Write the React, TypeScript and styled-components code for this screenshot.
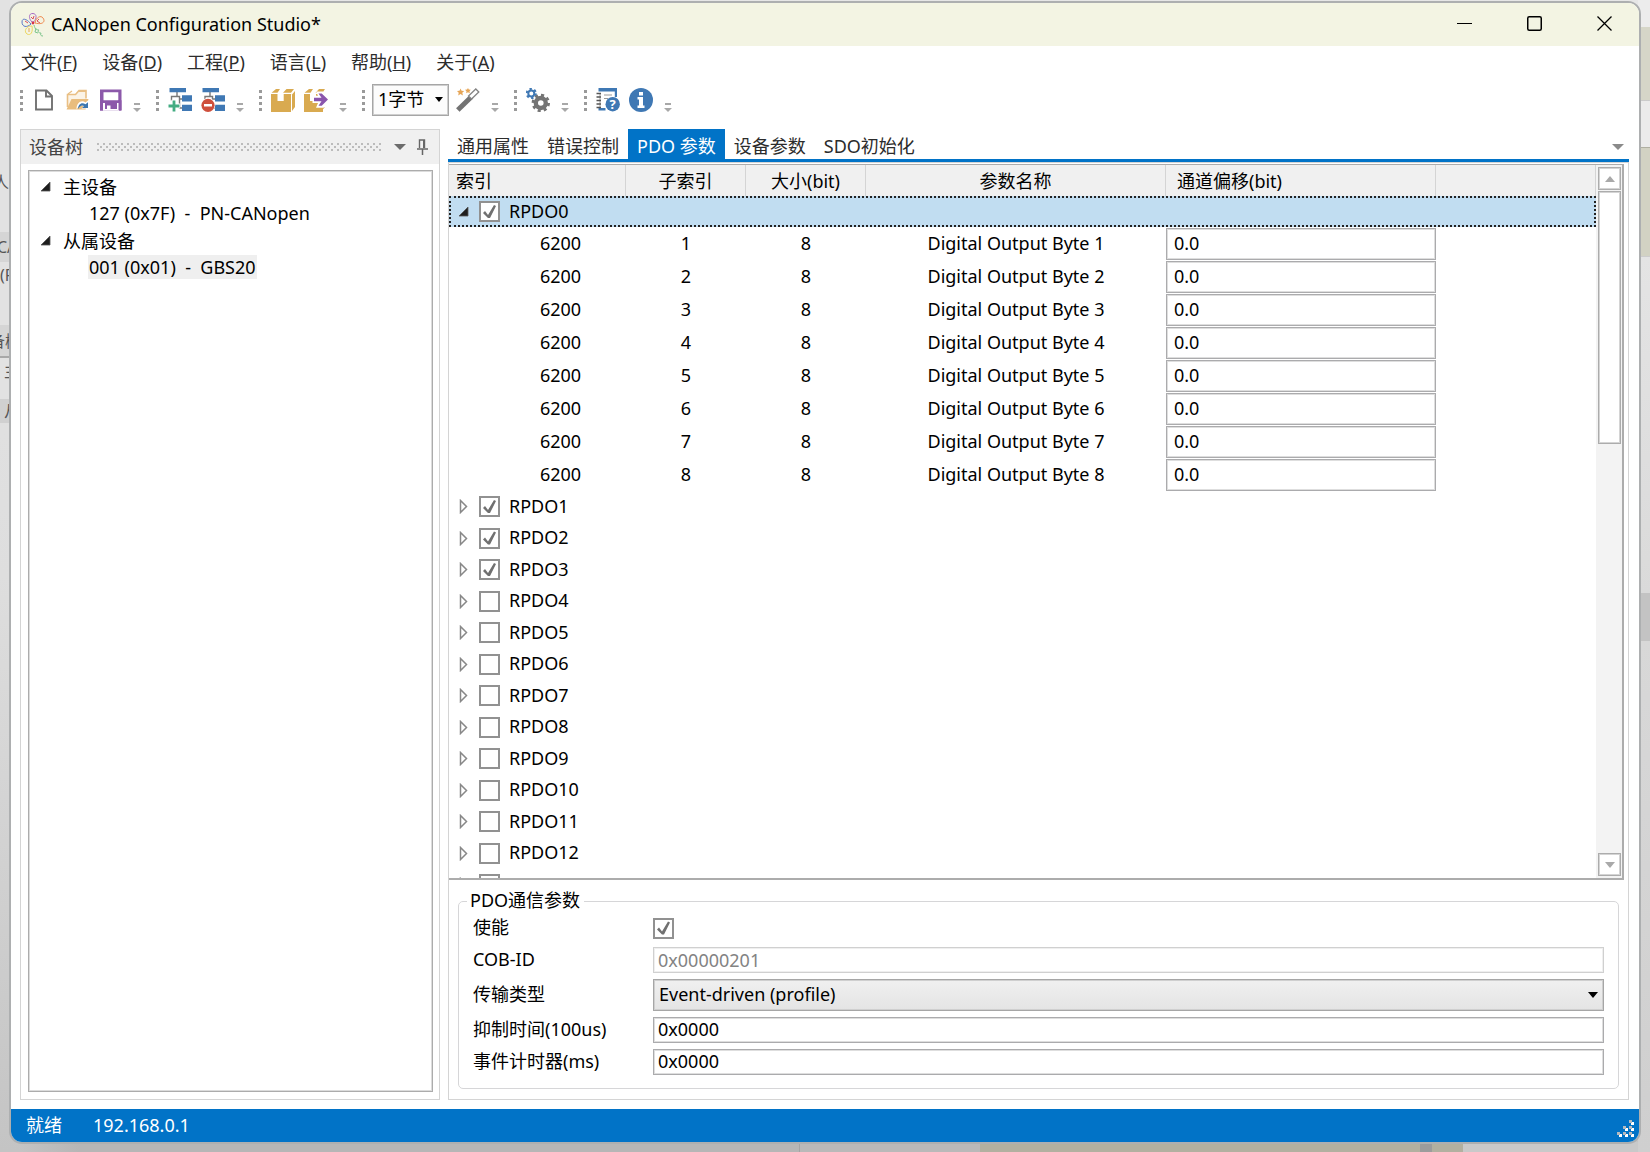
import React, { useState } from "react";
import styled, { createGlobalStyle, css } from "styled-components";

const color = {
  blue: "#0173c7",
  ink: "#000",
  chrome: "#f0f0f0",
  edge: "#d4d4d4",
  frame: "#acacac",
  selected: "#c1ddf1",
  titlebar: "#f3f4e3",
};

const GlobalStyle = createGlobalStyle`
  * { box-sizing: border-box; }
  body { margin: 0; }
  body, button, input, select {
    font-family: "Noto Sans", "Noto Sans CJK SC", sans-serif;
    font-size: 18px;
    line-height: 24px;
    color: ${color.ink};
  }
  button, input, select { margin: 0; padding: 0; border: 0; border-radius: 0; background: none; }
  svg { display: block; flex: none; }
`;

/* ---------- desktop behind the window ---------- */

const Desktop = styled.div`
  position: relative;
  display: flex;
  height: 100vh;
  min-height: 700px;
  padding: 1px 9px 8px;
  overflow: hidden;
  background: linear-gradient(#e6e6e6, #dedede 50%, #c4c4c4);
`;

const BehindLeft = styled.div`
  position: absolute;
  top: 0;
  left: 0;
  width: 10px;
  overflow: hidden;
  font-size: 16px;
  color: #555;
  background: #e2e2e2;
`;

const BehindRow = styled.div<{ $h: number; $shade?: string; $indent?: number; $line?: boolean }>`
  height: ${(p) => p.$h}px;
  line-height: ${(p) => p.$h}px;
  text-indent: ${(p) => p.$indent ?? 0}px;
  white-space: nowrap;
  background: ${(p) => p.$shade ?? "transparent"};
  border-bottom: ${(p) => (p.$line ? "2px solid #a8a8a8" : "0")};
`;

const BehindRight = styled.div`
  position: absolute;
  top: 0;
  right: 0;
  bottom: 0;
  width: 12px;
  background: linear-gradient(
    #ececec 27px, #d6d6c8 27px, #d6d6c8 100px, #aaa 100px, #ebebeb 101px, #ebebeb 147px,
    #8c8c80 147px, #d2d2c3 148px, #d2d2c3 256px, #b4b4b4 256px, #e4e4e4 257px, #dadada 593px,
    #c3c3c3 593px, #c3c3c3 641px, #d8d8d8 641px, #cfcfcf
  );
`;

const BehindBottom = styled.div`
  position: absolute;
  left: 20px;
  right: 12px;
  bottom: 0;
  height: 10px;
  background: linear-gradient(
    90deg, #c4c4c4, #b6b6b6 60px, #b6b6b6 779px, #8f8f8f 779px, #b9b9b9 780px, #b9b9b9 960px,
    #b2b0a0 960px, #b2b0a0 1400px, #9c9c9c 1400px, #9c9c9c 1412px, #b2b0a0 1412px,
    #b2b0a0 1443px, #c9c9c9 1443px
  );
`;

/* ---------- window ---------- */

const AppWindow = styled.main`
  position: relative;
  flex: 1;
  min-width: 0;
  display: flex;
  flex-direction: column;
  overflow: hidden;
  border: 2px solid #adafb0;
  border-radius: 13px;
  background: #fff;
`;

const TitleBar = styled.header`
  display: flex;
  align-items: center;
  height: 43px;
  padding-left: 10px;
  gap: 6px;
  background: ${color.titlebar};
`;

const Title = styled.h1`
  flex: 1;
  margin: 0;
  padding-bottom: 2px;
  font-size: 18px;
  font-weight: 400;
  line-height: 24px;
`;

const CaptionButtons = styled.div`
  display: flex;
`;

const CaptionButton = styled.button`
  display: grid;
  place-items: center;
  width: 70px;
  height: 43px;
  padding-bottom: 2px;
`;

const MenuBar = styled.nav`
  display: flex;
  gap: 25px;
  height: 34px;
  padding: 0 10px;
`;

const MenuItem = styled.button`
  padding-bottom: 2px;
  color: #2c2c2c;
  white-space: nowrap;
`;

const ToolBar = styled.div`
  display: flex;
  align-items: center;
  gap: 15px;
  height: 40px;
  padding: 0 9px;
`;

const ToolGroup = styled.div`
  display: flex;
  align-items: center;
  gap: 9px;
  height: 24px;
`;

const Gripper = styled.span`
  width: 3px;
  height: 21px;
  background: repeating-linear-gradient(#9a9a9a 0 3px, transparent 3px 6px);
`;

const ToolButton = styled.button`
  display: block;
  width: 24px;
  height: 24px;
`;

const OverflowButton = styled.button`
  align-self: flex-end;
  width: 8px;
  height: 9px;
  margin-left: 2px;
`;

const Picker = styled.span<{ $grow?: boolean }>`
  position: relative;
  display: block;
  width: ${(p) => (p.$grow ? "100%" : "77px")};
  margin: 0 ${(p) => (p.$grow ? 0 : -2)}px;

  svg {
    position: absolute;
    top: 13px;
    right: 6px;
    pointer-events: none;
  }
`;

const Select = styled.select<{ $filled?: boolean }>`
  display: block;
  appearance: none;
  width: 100%;
  height: 32px;
  padding: 0 20px 2px 5px;
  border: 1px solid #a6a6a6;
  box-shadow: inset 0 0 0 1px #cfcfcf;
  background: ${(p) => (p.$filled ? "linear-gradient(#f0f0f0, #e4e4e4)" : "#fcfcfc")};
`;

const Workspace = styled.div`
  flex: 1;
  min-height: 0;
  display: flex;
  gap: 8px;
  padding: 9px 10px 9px 9px;
`;

/* ---------- device tree ---------- */

const TreePanel = styled.aside`
  flex: none;
  width: 420px;
  display: flex;
  flex-direction: column;
  border: 1px solid ${color.edge};
`;

const PanelHeader = styled.div`
  display: flex;
  align-items: center;
  height: 34px;
  padding: 0 11px 0 8px;
  background: ${color.chrome};
`;

const PanelTitle = styled.h2`
  margin: 0;
  font-size: 18px;
  font-weight: 400;
  line-height: 24px;
  color: #444;
`;

const DotTexture = styled.span`
  flex: 1;
  height: 9px;
  margin: 0 12px 0 14px;
  background:
    radial-gradient(circle at 1px 1px, #bcbcbc 1px, transparent 1px) 0 0 / 6px 6px,
    radial-gradient(circle at 1px 1px, #bcbcbc 1px, transparent 1px) 3px 3px / 6px 6px;
`;

const HeaderButton = styled.button`
  display: grid;
  place-items: center;
  height: 24px;
  margin-right: 11px;

  &:last-child { margin-right: 0; }
`;

const TreeBox = styled.ul`
  flex: 1;
  margin: 6px 6px 7px 7px;
  padding: 2px 0 0;
  list-style: none;
  border: 1px solid ${color.frame};
  box-shadow: inset 0 0 0 1px #dcdcdc;

  ul { margin: 0; padding: 0 0 0 59px; list-style: none; }
`;

const TreeRow = styled.div`
  display: flex;
  align-items: center;
  height: 27px;
  padding-left: 11px;
  gap: 12px;
`;

const TreeLeaf = styled.button<{ $selected?: boolean }>`
  display: block;
  height: 24px;
  margin: 1px 0 2px;
  padding: 0 1px;
  white-space: pre;
  background: ${(p) => (p.$selected ? "#efefef" : "transparent")};
`;

/* ---------- tabs and grid ---------- */

const Editor = styled.section`
  flex: 1;
  min-width: 0;
  display: flex;
  flex-direction: column;
`;

const TabStrip = styled.div`
  display: flex;
  align-items: stretch;
  height: 33px;
  border-bottom: 3px solid ${color.blue};
`;

const Tab = styled.button<{ $active?: boolean }>`
  padding: 5px 9px 1px;
  white-space: nowrap;
  color: ${(p) => (p.$active ? "#fff" : "#2c2c2c")};
  background: ${(p) => (p.$active ? color.blue : "transparent")};
`;

const TabMenu = styled.button`
  margin-left: auto;
  padding: 5px 5px 0;
`;

const EditorBody = styled.div`
  flex: 1;
  min-height: 0;
  display: flex;
  flex-direction: column;
  border: 1px solid ${color.edge};
`;

const GridFrame = styled.div`
  flex: 1;
  min-height: 0;
  display: flex;
  margin: 1px 4px 0 0;
  border: solid ${color.frame};
  border-width: 1px 2px 2px 0;
`;

const GridViewport = styled.div`
  flex: 1;
  min-width: 0;
  overflow: hidden;
`;

const Table = styled.table`
  width: 100%;
  table-layout: fixed;
  border-collapse: separate;
  border-spacing: 0;
`;

const Col = styled.col<{ $w?: number }>`
  width: ${(p) => (p.$w ? `${p.$w}px` : "auto")};
`;

const Th = styled.th<{ $left?: number }>`
  height: 31px;
  padding: 0 0 0 ${(p) => p.$left ?? 0}px;
  font-weight: 400;
  text-align: ${(p) => (p.$left ? "left" : "center")};
  background: ${color.chrome};
  border-right: 1px solid ${color.edge};
`;

const GroupCell = styled.td<{ $tall?: boolean; $selected?: boolean }>`
  height: ${(p) => (p.$tall ? 32 : 31)}px;
  padding: 0;
  ${(p) =>
    p.$selected &&
    css`
      background: ${color.selected};
      outline: 2px dotted #222;
      outline-offset: -2px;
    `}
`;

const GroupLine = styled.div`
  display: flex;
  align-items: center;
  padding-left: 8px;
`;

const Expander = styled.button`
  display: grid;
  place-items: center;
  width: 12px;
  height: 20px;
  margin-right: 10px;
`;

const CheckLabel = styled.label`
  display: flex;
  align-items: center;
  gap: 9px;
`;

const CheckText = styled.span`
  padding-bottom: 2px;
`;

const CheckBox = styled.input.attrs({ type: "checkbox" })`
  appearance: none;
  flex: none;
  width: 21px;
  height: 21px;
  border: 2px solid #919191;
  background: #fff;

  &:checked::before {
    content: "";
    display: block;
    width: 17px;
    height: 17px;
    background: #707070;
    clip-path: polygon(2px 10px, 4px 8px, 7px 12px, 13px 2px, 15px 3px, 9px 15px, 7px 15px);
  }
`;

const Td = styled.td<{ $indent?: number }>`
  height: 33px;
  padding: 0 0 2px ${(p) => p.$indent ?? 0}px;
  text-align: center;
`;

const InputCell = styled.td`
  height: 33px;
  padding: 1px 0 0;
`;

const TextBox = styled.input<{ $tall?: boolean }>`
  display: block;
  width: 100%;
  height: ${(p) => (p.$tall ? 32 : 26)}px;
  padding: 0 ${(p) => (p.$tall ? 7 : 4)}px 2px;
  border: 1px solid #ababad;
  box-shadow: inset 0 0 0 1px #dedede;
  background: #fff;

  &:disabled {
    padding-bottom: 0;
    color: #838383;
    border-color: #d0d0d0;
    box-shadow: inset 0 0 0 1px #efefef;
  }
`;

const ScrollRail = styled.div`
  flex: none;
  display: flex;
  flex-direction: column;
  width: 26px;
  padding: 2px 1px 1px 2px;
  background: #f3f3f3;
`;

const ScrollPart = styled.button<{ $h: number; $end?: boolean }>`
  display: grid;
  place-items: center;
  flex: none;
  height: ${(p) => p.$h}px;
  margin-top: ${(p) => (p.$end ? "auto" : "0")};
  margin-bottom: 1px;
  border: 1px solid ${color.frame};
  box-shadow: inset 0 0 0 1px #d4d4d4;
  background: #fff;
`;

/* ---------- parameter form ---------- */

const FieldSet = styled.fieldset`
  min-width: 0;
  margin: 8px 9px 10px;
  padding: 1px 14px 13px 8px;
  border: 1px solid #d6d6d8;
  border-radius: 5px;
`;

const Legend = styled.legend`
  padding: 0 4px 2px 3px;
`;

const FormGrid = styled.div`
  display: grid;
  grid-template-columns: 174px minmax(0, 1fr);
  align-items: center;
  grid-auto-rows: minmax(26px, auto);
  gap: 6px;
  padding-left: 6px;
`;

const FieldLabel = styled.label`
  padding-bottom: 2px;
`;

const StatusBar = styled.footer`
  display: flex;
  align-items: center;
  gap: 31px;
  height: 33px;
  padding: 0 4px 2px 15px;
  color: #fff;
  background: ${color.blue};

  svg { margin-left: auto; align-self: flex-end; margin-bottom: 2px; }
`;

/* ---------- drawings ---------- */

const Logo = () => (
  <svg width="24" height="26" viewBox="0 0 24 26" fill="none" strokeWidth="1">
    <path d="M11 10C7 6 8 1 12 1.500c4 .5 4 5 .5 8.500z" stroke="#a86cc4" />
    <path d="M14 11c1-6 6-8 8-5 3 4-1 7-8 5z" stroke="#ee8a50" />
    <path d="M10 12C5 6 1 6 1 10c0 5 5 6 9 2z" stroke="#5a78c8" />
    <path d="M11 14c-7 0-8 6-5 8 4 2 6-2 5-8z" stroke="#ecd860" />
    <path d="M13 13c1 4 2 5 5 5-2 2 0 3 2 3-1 2 0 3 2 3M15 16l-1 4 3 1" stroke="#7cc48a" />
    <path d="M10 5l2 2 1-3M18 7l-2 2 3 2M4 9l3 2" stroke="#dc4c5c" />
    <circle cx="12" cy="11" r="1.400" fill="#d83248" />
    <path d="M7 17h2M7 19h2" stroke="#e6a658" />
  </svg>
);

const Down = ({ w = 12, h = 6, fill = "#6c6c6c" }: { w?: number; h?: number; fill?: string }) => (
  <svg width={w} height={h} viewBox="0 0 12 6" preserveAspectRatio="none">
    <path d="M0 0h12L6 6z" fill={fill} />
  </svg>
);

const Corner = () => (
  <svg width="11" height="11" viewBox="0 0 11 11">
    <path d="M10 1v9H1z" fill="#1e1e1e" stroke="#555" strokeWidth="0.8" />
  </svg>
);

const Closed = () => (
  <svg width="9" height="15" viewBox="0 0 9 15">
    <path d="M1.5 1.5v12L7.5 7.5z" fill="#fff" stroke="#888" strokeWidth="1.5" />
  </svg>
);

const OverflowMark = () => (
  <svg width="8" height="9" viewBox="0 0 8 9">
    <path d="M1 0h6v2H1zM0 5h8L4 9z" fill="#a8a8a8" />
  </svg>
);

const Pin = () => (
  <svg width="11" height="16" viewBox="0 0 11 16" fill="none" stroke="#666">
    <path d="M2.5 9V1h5v8" strokeWidth="1.4" />
    <path d="M7 1v8" strokeWidth="2" />
    <path d="M0 10h11M5.5 10v6" strokeWidth="1.5" />
  </svg>
);

const icons: Record<string, React.ReactNode> = {
  new: (
    <g fill="none" stroke="#717171" strokeWidth="1.9">
      <path d="M4 2.5h10.5L20 8v13.5H4z" />
      <path d="M14 3v5.5h5.5" />
    </g>
  ),
  open: (
    <>
      <path d="M2.5 19V6.5h8l3.500-4H21v8" fill="#fbf3e6" stroke="#e9bf84" strokeWidth="1.6" />
      <path d="M14 3.500h7M3 6l4-3" stroke="#e9bf84" strokeWidth="1.2" />
      <path d="M1.500 21.500L6.500 11h17l-3 10.500z" fill="#e9bd7e" />
      <path d="M11.500 21.500c0-7 5-10 9-7l2.500-2 1 8h-7.500l2-2.500c-2-1.200-5 0-7 3.500z" fill="#fff" />
      <path d="M13 21c0-5 4-7.500 7.500-4.700l2.500-2V20h-6l2-2c-2-1.500-4 0-6 3z" fill="#3d77b0" />
    </>
  ),
  save: (
    <>
      <path d="M2 1.500h21.500v21.300H2z" fill="#8c59aa" />
      <path d="M5.500 4.200h14.800v8H5.500z" fill="#fff" />
      <path d="M5 15h16v7.800H5z" fill="#fff" />
      <path d="M7 15h12v6H7z" fill="#8c59aa" />
      <path d="M9 17.500h3.500V21H9z" fill="#fff" />
      <path d="M2 12.200h3V22H2zM20.500 12.200h3V22h-3z" fill="#8c59aa" />
    </>
  ),
  add: (
    <>
      <path d="M9 4v4.500H3.500v4M9 8.500h2.500v11.500H14M11.500 11H14" fill="none" stroke="#777" strokeWidth="1.4" />
      <path d="M1.500 0H18v4.200H1.500zM14 7.200h10v6.300H14zM14 16.800h10V23H14z" fill="#3f78b4" />
      <path d="M6 11.800v12.200M0 18h12" stroke="#fff" strokeWidth="5" />
      <path d="M6 12.500v11M0.500 18h11" stroke="#43ac82" strokeWidth="2.800" />
    </>
  ),
  remove: (
    <>
      <path d="M9 4v4.500H4v4M9 8.500h2.500V11H14M13 20h1" fill="none" stroke="#777" strokeWidth="1.400" />
      <path d="M1.500 0H18v4.200H1.500zM14 7.200h10v6.300H14zM14 16.800h10V23H14z" fill="#3f78b4" />
      <circle cx="7" cy="17.300" r="7.200" fill="#fff" />
      <circle cx="7" cy="17.300" r="6.600" fill="#cf4f3c" />
      <path d="M3 17.300h8" stroke="#fff" strokeWidth="2.600" />
    </>
  ),
  box: (
    <>
      <path d="M0 6h6.500v7h6.200V6H20v18H0z" fill="#d9aa50" />
      <path d="M21 6.500l3-3.500v16L21 23z" fill="#d9aa50" />
      <path d="M0.500 4.800L5 1h4L6.500 4.800zM12 4.800L15.500 1H23l-3 3.800z" fill="#d9aa50" />
    </>
  ),
  export: (
    <>
      <path d="M0 6h6v7h6V6h7v18H0z" fill="#d9aa50" />
      <path d="M0.500 4.800L5 1h4L6.500 4.800zM11.500 4.800L15 1h6l-2.500 3.800zM17 20.500l4-1.500-4 4.500z" fill="#d9aa50" />
      <path d="M8.500 7.800h5.500L12 3.500h7l7 8-7 8.200h-7l2-4.700H8.500z" fill="#fff" />
      <path d="M10 9.800h7.500L14.500 5.500h3.200l6.300 6-6.300 6.200h-3.200l3-4.500H10z" fill="#8a55ad" />
    </>
  ),
  wand: (
    <>
      <path d="M1.800 22L15.500 8.800" stroke="#737373" strokeWidth="5" />
      <path d="M12.500 8L19.800 1l3 3-7.300 7z" fill="#fff" stroke="#858585" strokeWidth="1.300" />
      <path d="M4.500 0.500l1.100 2.300 2.600.2-1.900 1.800.6 2.600-2.400-1.300-2.300 1.300.5-2.600L1 3l2.500-.3zM12 0l.8 1.500 2 .3-1.300 1.500.3 2-1.800-1-1.800 1 .3-2-1.500-1.500 2-.3z" fill="#e6a658" />
    </>
  ),
  gears: (
    <>
      <circle cx="5.300" cy="5.500" r="3" fill="none" stroke="#3f78b4" strokeWidth="2" />
      <circle cx="5.300" cy="5.500" r="4.600" fill="none" stroke="#3f78b4" strokeWidth="2" strokeDasharray="2.400 2.420" />
      <circle cx="14.800" cy="15" r="5" fill="none" stroke="#747474" strokeWidth="4.400" />
      <circle cx="14.800" cy="15" r="7.800" fill="none" stroke="#747474" strokeWidth="2.800" strokeDasharray="3.060 3.060" />
    </>
  ),
  help: (
    <>
      <path d="M2.500 0H21v9h-2.200V3.600H2.500zM2.500 20h7v2.500h-7z" fill="#3f78b4" />
      <path d="M4 5v15" stroke="#9a9a9a" strokeWidth="1" />
      <path d="M0.500 5.500H5M0.500 9H5M0.500 12.500H5M0.500 16H5M0.500 19.500H5" stroke="#555" strokeWidth="1.400" />
      <path d="M8 7h8M8 10.500h4" stroke="#999" strokeWidth="1.200" />
      <circle cx="16.700" cy="16.200" r="7.200" fill="#3f78b4" />
      <text x="16.700" y="21" textAnchor="middle" fontSize="13" fontWeight="700" fill="#fff">?</text>
    </>
  ),
  info: (
    <>
      <circle cx="12" cy="12" r="12" fill="#3f78b4" />
      <path d="M10 4h4v3.400h-4zM8.500 9H14v8.500h1.500V20h-7v-2.500H10v-6H8.500z" fill="#fff" />
    </>
  ),
};

const Icon = ({ name }: { name: string }) => (
  <svg width="24" height="24" viewBox="0 0 24 24">{icons[name]}</svg>
);

const SizeGrip = () => (
  <svg width="18" height="18" viewBox="0 0 18 18">
    {[[12, 0], [6, 6], [12, 6], [0, 12], [6, 12], [12, 12]].map(([x, y]) => (
      <g key={`${x}-${y}`}>
        <rect x={x + 2} y={y + 2} width="3" height="3" fill="#fff" />
        <rect x={x} y={y} width="3" height="3" fill="#b4b9bf" />
      </g>
    ))}
  </svg>
);

/* ---------- data ---------- */

const menus: [string, string][] = [
  ["文件", "F"], ["设备", "D"], ["工程", "P"], ["语言", "L"], ["帮助", "H"], ["关于", "A"],
];

const toolGroups: { size?: boolean; tools: [string, string][] }[] = [
  { tools: [["new", "新建"], ["open", "打开"], ["save", "保存"]] },
  { tools: [["add", "添加设备"], ["remove", "删除设备"]] },
  { tools: [["box", "打包"], ["export", "导出"]] },
  { size: true, tools: [["wand", "自动分配"]] },
  { tools: [["gears", "设置"]] },
  { tools: [["help", "帮助"], ["info", "关于"]] },
];

const tabs = ["通用属性", "错误控制", "PDO 参数", "设备参数", "SDO初始化"];
const bytes = [1, 2, 3, 4, 5, 6, 7, 8];
const pdos = Array.from({ length: 14 }, (_, i) => i);

const PdoRow = ({ n, open, onToggle }: { n: number; open: boolean; onToggle?: () => void }) => (
  <tr>
    <GroupCell colSpan={6} $tall={n > 0 && n % 2 === 0} $selected={n === 0}>
      <GroupLine>
        <Expander aria-label={`RPDO${n}`} aria-expanded={open} onClick={onToggle}>
          {open ? <Corner /> : <Closed />}
        </Expander>
        <CheckLabel>
          <CheckBox defaultChecked={n < 4} />
          <CheckText>RPDO{n}</CheckText>
        </CheckLabel>
      </GroupLine>
    </GroupCell>
  </tr>
);

export default function App() {
  const [active, setActive] = useState(2);
  const [open, setOpen] = useState(true);

  return (
    <Desktop>
      <GlobalStyle />
      <BehindLeft aria-hidden="true">
        <BehindRow $h={164} />
        <BehindRow $h={36} $indent={-7}>人</BehindRow>
        <BehindRow $h={32} />
        <BehindRow $h={30} $indent={-3} $shade="#d5d5d5">CA</BehindRow>
        <BehindRow $h={27}>(F</BehindRow>
        <BehindRow $h={36} />
        <BehindRow $h={33} $indent={-11} $shade="#d5d5d5" $line>备树</BehindRow>
        <BehindRow $h={26} $indent={4}>主</BehindRow>
        <BehindRow $h={15} />
        <BehindRow $h={24} $indent={4} $shade="#d0d0d0">从</BehindRow>
      </BehindLeft>
      <BehindBottom />
      <BehindRight />

      <AppWindow>
        <TitleBar>
          <Logo />
          <Title>CANopen Configuration Studio*</Title>
          <CaptionButtons>
            <CaptionButton aria-label="最小化">
              <svg width="15" height="15" viewBox="0 0 15 15"><path d="M0 7.500h15" stroke="#000" /></svg>
            </CaptionButton>
            <CaptionButton aria-label="最大化">
              <svg width="15" height="15" viewBox="0 0 15 15">
                <rect x="0.750" y="0.750" width="13.500" height="13.500" rx="1.500" fill="none" stroke="#000" strokeWidth="1.500" />
              </svg>
            </CaptionButton>
            <CaptionButton aria-label="关闭">
              <svg width="15" height="15" viewBox="0 0 15 15">
                <path d="M0.500 0.500l14 14M14.500 0.500l-14 14" stroke="#000" strokeWidth="1.300" />
              </svg>
            </CaptionButton>
          </CaptionButtons>
        </TitleBar>

        <MenuBar>
          {menus.map(([name, key]) => (
            <MenuItem key={key}>{name}(<u>{key}</u>)</MenuItem>
          ))}
        </MenuBar>

        <ToolBar>
          {toolGroups.map((group, i) => (
            <ToolGroup key={i}>
              <Gripper />
              {group.size && (
                <Picker>
                  <Select aria-label="字节数"><option>1字节</option></Select>
                  <Down w={8} h={5} fill="#000" />
                </Picker>
              )}
              {group.tools.map(([name, label]) => (
                <ToolButton key={name} aria-label={label}><Icon name={name} /></ToolButton>
              ))}
              <OverflowButton aria-label="更多"><OverflowMark /></OverflowButton>
            </ToolGroup>
          ))}
        </ToolBar>

        <Workspace>
          <TreePanel>
            <PanelHeader>
              <PanelTitle>设备树</PanelTitle>
              <DotTexture />
              <HeaderButton aria-label="选项"><Down /></HeaderButton>
              <HeaderButton aria-label="固定"><Pin /></HeaderButton>
            </PanelHeader>
            <TreeBox>
              <li>
                <TreeRow><Corner />主设备</TreeRow>
                <ul><li><TreeLeaf>{"127 (0x7F)  -  PN-CANopen"}</TreeLeaf></li></ul>
              </li>
              <li>
                <TreeRow><Corner />从属设备</TreeRow>
                <ul><li><TreeLeaf $selected>{"001 (0x01)  -  GBS20"}</TreeLeaf></li></ul>
              </li>
            </TreeBox>
          </TreePanel>

          <Editor>
            <TabStrip role="tablist">
              {tabs.map((name, i) => (
                <Tab key={name} role="tab" aria-selected={i === active} $active={i === active} onClick={() => setActive(i)}>
                  {name}
                </Tab>
              ))}
              <TabMenu aria-label="选项卡列表"><Down fill="#8a8a8a" /></TabMenu>
            </TabStrip>

            <EditorBody>
              <GridFrame>
                <GridViewport>
                  <Table>
                    <colgroup>
                      <Col $w={177} /><Col $w={120} /><Col $w={120} /><Col $w={300} /><Col $w={270} /><Col />
                    </colgroup>
                    <thead>
                      <tr>
                        <Th $left={7}>索引</Th>
                        <Th>子索引</Th>
                        <Th>大小(bit)</Th>
                        <Th>参数名称</Th>
                        <Th $left={11}>通道偏移(bit)</Th>
                        <Th />
                      </tr>
                    </thead>
                    <tbody>
                      <PdoRow n={0} open={open} onToggle={() => setOpen(!open)} />
                      {open && bytes.map((n) => (
                        <tr key={n}>
                          <Td $indent={46}>6200</Td>
                          <Td>{n}</Td>
                          <Td>8</Td>
                          <Td>Digital Output Byte {n}</Td>
                          <InputCell><TextBox $tall aria-label={`通道偏移 ${n}`} defaultValue="0.0" /></InputCell>
                          <Td />
                        </tr>
                      ))}
                      {pdos.slice(1).map((n) => <PdoRow key={n} n={n} open={false} />)}
                    </tbody>
                  </Table>
                </GridViewport>
                <ScrollRail>
                  <ScrollPart $h={23} aria-label="向上滚动">
                    <svg width="10" height="6" viewBox="0 0 10 6"><path d="M0 6h10L5 0z" fill="#a9a9a9" /></svg>
                  </ScrollPart>
                  <ScrollPart $h={253} aria-label="滚动块" />
                  <ScrollPart $h={23} $end aria-label="向下滚动"><Down w={10} fill="#a9a9a9" /></ScrollPart>
                </ScrollRail>
              </GridFrame>

              <FieldSet>
                <Legend>PDO通信参数</Legend>
                <FormGrid>
                  <FieldLabel htmlFor="enable">使能</FieldLabel>
                  <CheckBox id="enable" defaultChecked />
                  <FieldLabel htmlFor="cob">COB-ID</FieldLabel>
                  <TextBox id="cob" disabled defaultValue="0x00000201" />
                  <FieldLabel htmlFor="transmission">传输类型</FieldLabel>
                  <Picker $grow>
                    <Select id="transmission" $filled><option>Event-driven (profile)</option></Select>
                    <Down w={10} fill="#000" />
                  </Picker>
                  <FieldLabel htmlFor="inhibit">抑制时间(100us)</FieldLabel>
                  <TextBox id="inhibit" defaultValue="0x0000" />
                  <FieldLabel htmlFor="timer">事件计时器(ms)</FieldLabel>
                  <TextBox id="timer" defaultValue="0x0000" />
                </FormGrid>
              </FieldSet>
            </EditorBody>
          </Editor>
        </Workspace>

        <StatusBar>
          <span>就绪</span>
          <span>192.168.0.1</span>
          <SizeGrip />
        </StatusBar>
      </AppWindow>
    </Desktop>
  );
}
